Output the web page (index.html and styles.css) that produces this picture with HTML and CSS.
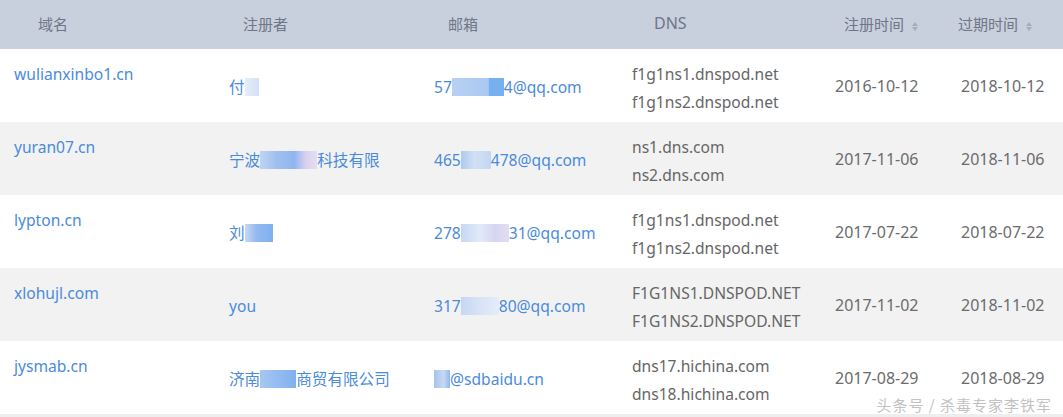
FILE: index.html
```html
<!DOCTYPE html>
<html>
<head>
  <meta charset="utf-8">
  <title>域名列表</title>
  <link rel="stylesheet" href="styles.css">
</head>
<body>
  <div class="wrap">
    <table class="domains">
      <thead>
        <tr>
          <th class="c-name"><span class="h1">域名</span></th>
          <th class="c-owner"><span class="h2">注册者</span></th>
          <th class="c-mail"><span class="h3">邮箱</span></th>
          <th class="c-dns"><span class="h4">DNS</span></th>
          <th class="c-reg"><span class="h5">注册时间</span><span class="sort"></span></th>
          <th class="c-exp"><span class="h6">过期时间</span><span class="sort"></span></th>
        </tr>
      </thead>
      <tbody>
        <tr>
          <td class="c-name"><a href="#">wulianxinbo1.cn</a></td>
          <td class="c-owner link">付<span class="blur b-a" style="width:14px"></span></td>
          <td class="c-mail link">57<span class="blur b-b" style="width:52px"></span>4@qq.com</td>
          <td class="c-dns">f1g1ns1.dnspod.net<br>f1g1ns2.dnspod.net</td>
          <td class="c-reg">2016-10-12</td>
          <td class="c-exp">2018-10-12</td>
        </tr>
        <tr class="alt">
          <td class="c-name"><a href="#">yuran07.cn</a></td>
          <td class="c-owner link">宁波<span class="blur b-c" style="width:57px"></span>科技有限</td>
          <td class="c-mail link">465<span class="blur b-d" style="width:30px"></span>478@qq.com</td>
          <td class="c-dns">ns1.dns.com<br>ns2.dns.com</td>
          <td class="c-reg">2017-11-06</td>
          <td class="c-exp">2018-11-06</td>
        </tr>
        <tr>
          <td class="c-name"><a href="#">lypton.cn</a></td>
          <td class="c-owner link">刘<span class="blur b-e" style="width:28px"></span></td>
          <td class="c-mail link">278<span class="blur b-f" style="width:48px"></span>31@qq.com</td>
          <td class="c-dns">f1g1ns1.dnspod.net<br>f1g1ns2.dnspod.net</td>
          <td class="c-reg">2017-07-22</td>
          <td class="c-exp">2018-07-22</td>
        </tr>
        <tr class="alt">
          <td class="c-name"><a href="#">xlohujl.com</a></td>
          <td class="c-owner link">you</td>
          <td class="c-mail link">317<span class="blur b-g" style="width:38px"></span>80@qq.com</td>
          <td class="c-dns">F1G1NS1.DNSPOD.NET<br>F1G1NS2.DNSPOD.NET</td>
          <td class="c-reg">2017-11-02</td>
          <td class="c-exp">2018-11-02</td>
        </tr>
        <tr>
          <td class="c-name"><a href="#">jysmab.cn</a></td>
          <td class="c-owner link">济南<span class="blur b-h" style="width:36px"></span>商贸有限公司</td>
          <td class="c-mail link"><span class="blur b-i" style="width:16px"></span>@sdbaidu.cn</td>
          <td class="c-dns">dns17.hichina.com<br>dns18.hichina.com</td>
          <td class="c-reg">2017-08-29</td>
          <td class="c-exp">2018-08-29</td>
        </tr>
      </tbody>
    </table>
    <div class="watermark">头条号 / 杀毒专家李铁军</div>
  </div>
</body>
</html>
```

FILE: styles.css
```css
* {
  box-sizing: border-box;
}
body {
  margin: 0;
  background-color: #eeeeee;
  font-family: "Noto Sans", "Noto Sans CJK SC", sans-serif;
  color: #666666;
}
.wrap {
  position: relative;
  width: 1063px;
}
.domains {
  width: 1063px;
  border-collapse: collapse;
  table-layout: fixed;
}
.domains th {
  height: 49px;
  background-color: #c8cfdd;
  color: #6e7688;
  font-size: 15px;
  font-weight: normal;
  text-align: left;
  padding: 0 0 3px 0;
  white-space: nowrap;
}
.domains td {
  height: 73px;
  font-size: 15.6px;
  padding: 0;
  background-color: #ffffff;
  white-space: nowrap;
}
.domains tr.alt td {
  background-color: #f2f2f2;
}
.c-name { width: 215px; }
.c-owner { width: 205px; }
.c-mail { width: 198px; }
.c-dns { width: 203px; }
.c-reg { width: 126px; }
.c-exp { width: 116px; }

td.c-name {
  vertical-align: top;
  padding: 14px 0 0 14px;
}
td.c-owner { padding-left: 14px; padding-top: 2px; }
td.c-mail { padding-left: 14px; padding-top: 2px; }
td.c-dns {
  padding-left: 14px;
  line-height: 28px;
  padding-top: 4px;
}
.domains td.c-reg, .domains td.c-exp {
  padding-left: 14px;
  font-size: 16px;
  color: #6c6c6c;
}
.domains a {
  color: #4a8bdc;
  text-decoration: none;
}
.link {
  color: #4a8bdc;
}
.h1 { padding-left: 38px; }
.h2 { padding-left: 28px; }
.h3 { padding-left: 28px; }
.h4 { padding-left: 36px; font-size: 16px; }
.h5 { padding-left: 23px; }
.h6 { padding-left: 11px; }

.sort {
  display: inline-block;
  position: relative;
  width: 7px;
  height: 9px;
  margin-left: 8px;
  vertical-align: -1px;
}
.sort::before, .sort::after {
  content: "";
  position: absolute;
  left: 0;
  border-left: 3.5px solid transparent;
  border-right: 3.5px solid transparent;
}
.sort::before {
  top: 0;
  border-bottom: 4px solid #a7adba;
}
.sort::after {
  bottom: 0;
  border-top: 4px solid #a7adba;
}

.blur {
  display: inline-block;
  height: 18px;
  vertical-align: -3px;
}
.b-a { background: linear-gradient(90deg, #e6ecf9, #d4e1f7); }
.b-b { background: linear-gradient(90deg, #b9d0f3 0%, #aac8f2 70%, #76b0ef 72%, #76b0ef 100%); }
.b-c { background: linear-gradient(90deg, #c0d4f2 0%, #9fbff0 30%, #8fb6ef 60%, #d8d0ee 80%, #e3def2 100%); }
.b-d { background: linear-gradient(90deg, #aec9f1 0%, #d2e0f5 45%, #c2d6f3 100%); }
.b-e { background: linear-gradient(90deg, #c9d8f3 0%, #94baf0 40%, #7fb0ef 100%); }
.b-f { background: linear-gradient(90deg, #c6d7f3 0%, #e2eaf8 40%, #d6d5f0 70%, #e4ddf3 100%); }
.b-g { background: linear-gradient(90deg, #c5d7f3 0%, #d8e3f6 50%, #e6ecf9 100%); }
.b-h { background: linear-gradient(90deg, #a8c6f1 0%, #7fb1ef 100%); }
.b-i { background: linear-gradient(90deg, #a6c3ee 0%, #c7d8f3 60%, #8fb8ef 100%); }

.watermark {
  position: absolute;
  right: 11px;
  bottom: -1px;
  font-family: "Noto Sans CJK SC", sans-serif;
  font-size: 15px;
  color: #c2c2c2;
  text-shadow: 0 0 1px #ffffff, 0 0 2px #ffffff;
  letter-spacing: 1px;
}
```
